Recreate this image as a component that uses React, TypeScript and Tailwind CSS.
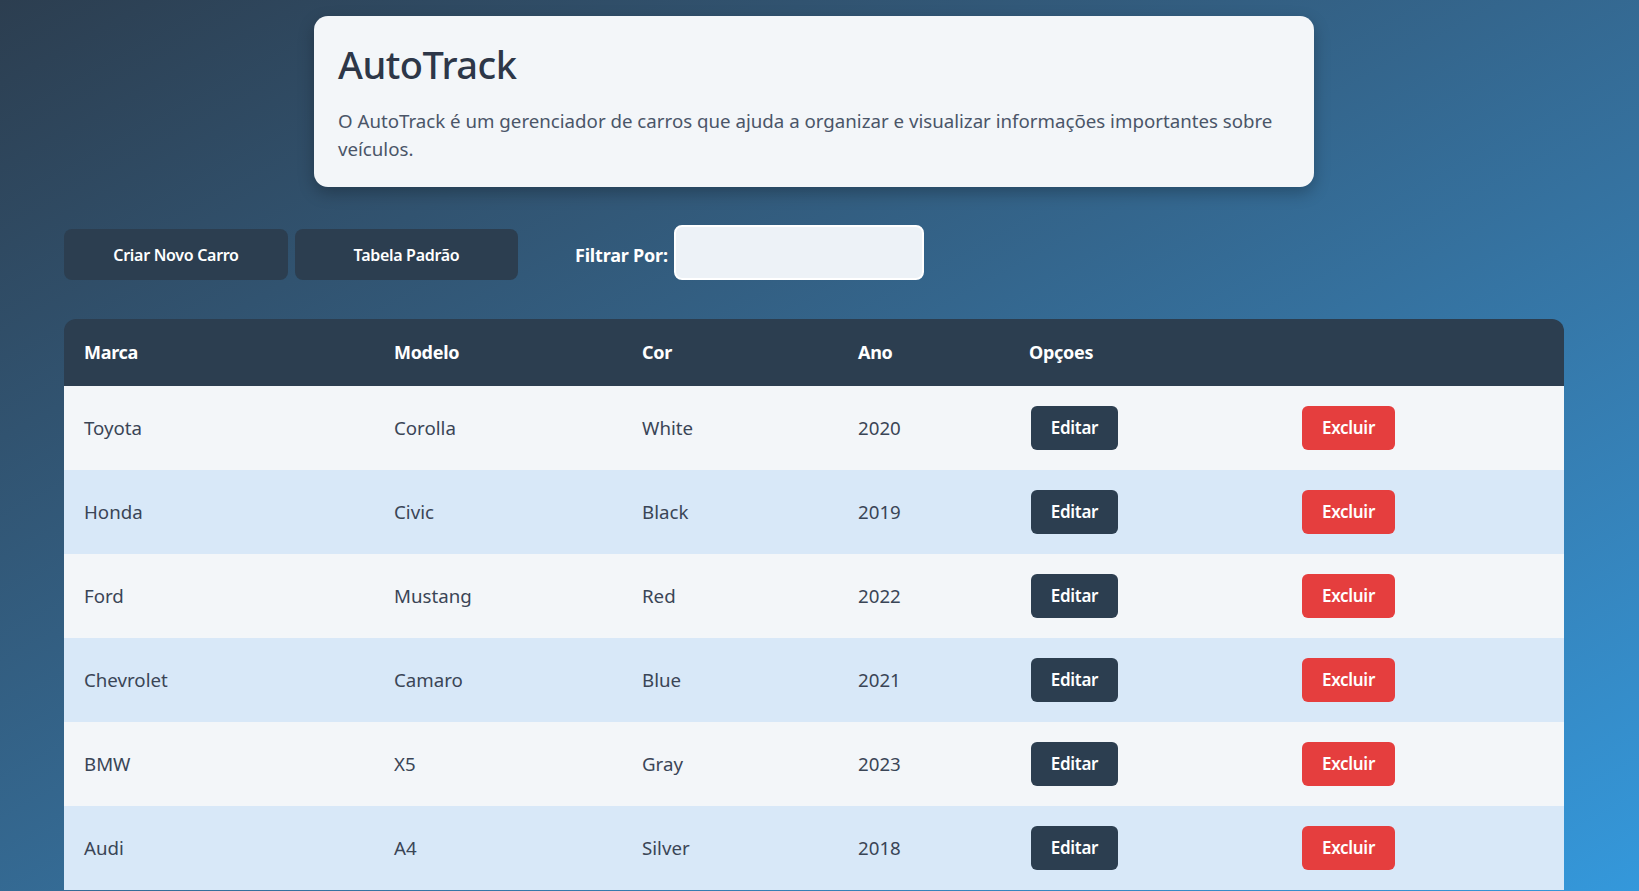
import React from "react";

const cars = [
  { marca: "Toyota", modelo: "Corolla", cor: "White", ano: "2020" },
  { marca: "Honda", modelo: "Civic", cor: "Black", ano: "2019" },
  { marca: "Ford", modelo: "Mustang", cor: "Red", ano: "2022" },
  { marca: "Chevrolet", modelo: "Camaro", cor: "Blue", ano: "2021" },
  { marca: "BMW", modelo: "X5", cor: "Gray", ano: "2023" },
  { marca: "Audi", modelo: "A4", cor: "Silver", ano: "2018" },
];

const cols = "grid grid-cols-[310px_248px_216px_171px_271px_284px]";

export default function App() {
  return (
    <div
      className="h-screen overflow-hidden bg-gradient-to-br from-[#2c3e50] to-[#3498db] pt-[16px]"
      style={{ fontFamily: '"Noto Sans", "Open Sans", sans-serif' }}
    >
      <div className="ml-[314px] w-[1000px] h-[171px] rounded-[14px] bg-[#f3f6f9] shadow-[0_6px_16px_rgba(0,0,0,0.25)] px-6 pt-6">
        <h1 className="text-[38px] leading-[48px] font-medium tracking-[-0.5px] text-[#2d3748] mb-[19px]">AutoTrack</h1>
        <p className="text-[18.7px] leading-[28px] text-[#4a5568]">
          O AutoTrack é um gerenciador de carros que ajuda a organizar e visualizar informações importantes sobre veículos.
        </p>
      </div>

      <div className="mt-[38px] ml-[64px] flex items-end">
        <button className="w-[224px] h-[51px] rounded-[8px] bg-[#2c3e50] text-white text-[16px] font-semibold tracking-[-0.3px]">
          Criar Novo Carro
        </button>
        <button className="ml-[7px] w-[223px] h-[51px] rounded-[8px] bg-[#2c3e50] text-white text-[16px] font-semibold tracking-[-0.3px]">
          Tabela Padrão
        </button>
        <span className="ml-[57px] self-center mt-[5px] text-white text-[18px] font-bold tracking-[-0.2px]">Filtrar Por:</span>
        <input
          className="ml-[6px] w-[250px] h-[55px] rounded-[8px] border-2 border-white bg-[#edf2f7] outline-none px-3"
          type="text"
        />
      </div>

      <div className="mt-[39px] ml-[64px] w-[1500px]">
        <div className={`${cols} h-[67px] items-center rounded-t-[12px] bg-[#2c3e50] text-white text-[18px] font-bold tracking-[-0.3px]`}>
          <div className="pl-5">Marca</div>
          <div className="pl-5">Modelo</div>
          <div className="pl-5">Cor</div>
          <div className="pl-5">Ano</div>
          <div className="pl-5">Opçoes</div>
          <div></div>
        </div>
        {cars.map((c, i) => (
          <div
            key={i}
            className={`${cols} h-[84px] items-center text-[18.7px] text-[#3a4556] ${i % 2 === 0 ? "bg-[#f3f6f9]" : "bg-[#d8e8f8]"}`}
          >
            <div className="pl-5">{c.marca}</div>
            <div className="pl-5">{c.modelo}</div>
            <div className="pl-5">{c.cor}</div>
            <div className="pl-5">{c.ano}</div>
            <div className="pl-[22px]">
              <button className="w-[87px] h-[44px] rounded-[6px] bg-[#2c3e50] text-white text-[17px] font-semibold tracking-[-0.3px]">
                Editar
              </button>
            </div>
            <div className="pl-[22px]">
              <button className="w-[93px] h-[44px] rounded-[6px] bg-[#e53e3e] text-white text-[17px] font-semibold tracking-[-0.3px]">
                Excluir
              </button>
            </div>
          </div>
        ))}
      </div>
    </div>
  );
}
